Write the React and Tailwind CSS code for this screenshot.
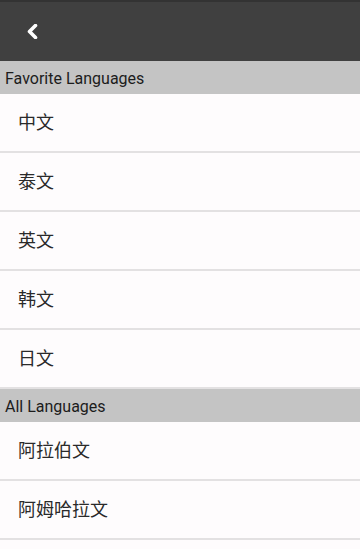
const favorites = ['中文', '泰文', '英文', '韩文', '日文'];
const all = ['阿拉伯文', '阿姆哈拉文'];

function SectionHeader({ title }) {
  return (
    <div className="h-[33px] bg-[#c4c4c4] flex items-center px-[5px] pt-[2px] text-[16px] text-[#1c1c1c]">
      {title}
    </div>
  );
}

function Row({ label }) {
  return (
    <div className="h-[59px] bg-[#fefcfd] border-b-2 border-[#e3e1e2] flex items-center pl-[18px] text-[18px] text-[#2a2a2a]">
      {label}
    </div>
  );
}

export default function App() {
  return (
    <div
      className="w-[360px] h-[549px] overflow-hidden bg-[#fefcfd]"
      style={{ fontFamily: 'Roboto, "Noto Sans CJK SC", sans-serif' }}
    >
      <div className="h-[61px] bg-[#404040] border-t-2 border-[#333333] flex items-center pl-[27px]">
        <svg width="11" height="15" viewBox="0 0 11 15">
          <path d="M8.5 1.5 L2.5 7.5 L8.5 13.5" fill="none" stroke="#fff" strokeWidth="3.6" strokeLinecap="round" strokeLinejoin="round" />
        </svg>
      </div>
      <SectionHeader title="Favorite Languages" />
      {favorites.map((l) => (
        <Row key={l} label={l} />
      ))}
      <SectionHeader title="All Languages" />
      {all.map((l) => (
        <Row key={l} label={l} />
      ))}
    </div>
  );
}
